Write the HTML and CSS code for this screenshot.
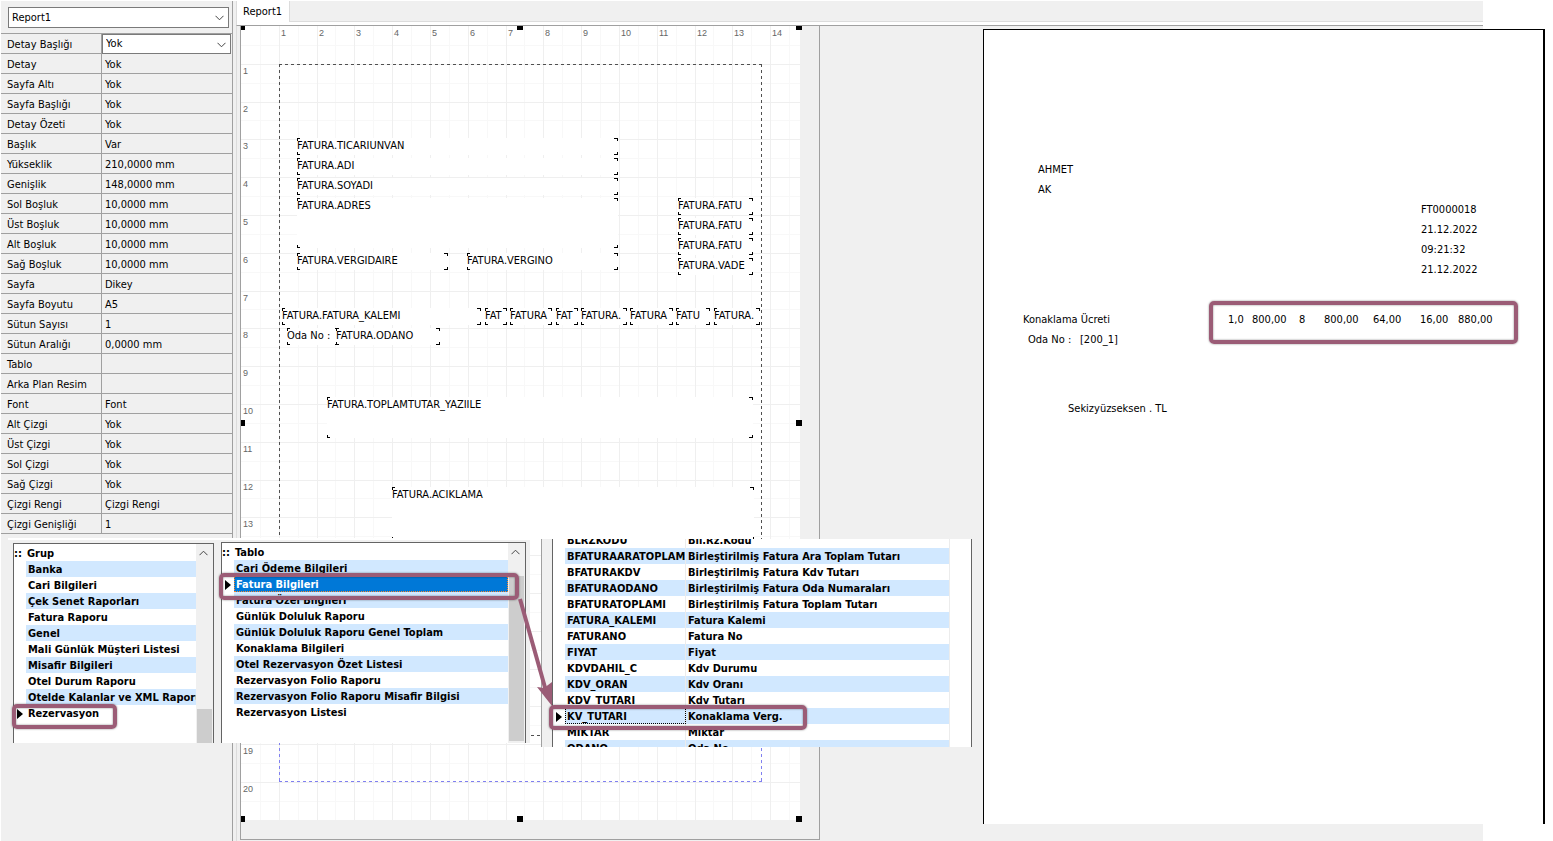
FILE: index.html
```html
<!DOCTYPE html>
<html lang="tr">
<head>
  <meta charset="UTF-8">
  <title>Report1</title>
  <link rel="stylesheet" href="styles.css">
</head>
<body>
  <div class="app">
    <!-- Properties -->
    <aside class="sidebar">
      <div class="report-picker">
        <div class="combo">
          <select aria-label="Rapor"><option>Report1</option></select>
          <svg class="chevron" viewBox="0 0 9 6"><path d="M.5 .8l4 4 4-4"/></svg>
        </div>
      </div>
      <table class="props">
        <tr><th><label for="detayBasligi">Detay Başlığı</label></th><td class="editing">
          <div class="combo">
            <select id="detayBasligi"><option>Yok</option><option>Var</option></select>
            <svg class="chevron" viewBox="0 0 9 6"><path d="M.5 .8l4 4 4-4"/></svg>
          </div>
        </td></tr>
        <tr><th>Detay</th><td>Yok</td></tr>
        <tr><th>Sayfa Altı</th><td>Yok</td></tr>
        <tr><th>Sayfa Başlığı</th><td>Yok</td></tr>
        <tr><th>Detay Özeti</th><td>Yok</td></tr>
        <tr><th>Başlık</th><td>Var</td></tr>
        <tr><th>Yükseklik</th><td>210,0000 mm</td></tr>
        <tr><th>Genişlik</th><td>148,0000 mm</td></tr>
        <tr><th>Sol Boşluk</th><td>10,0000 mm</td></tr>
        <tr><th>Üst Boşluk</th><td>10,0000 mm</td></tr>
        <tr><th>Alt Boşluk</th><td>10,0000 mm</td></tr>
        <tr><th>Sağ Boşluk</th><td>10,0000 mm</td></tr>
        <tr><th>Sayfa</th><td>Dikey</td></tr>
        <tr><th>Sayfa Boyutu</th><td>A5</td></tr>
        <tr><th>Sütun Sayısı</th><td>1</td></tr>
        <tr><th>Sütun Aralığı</th><td>0,0000 mm</td></tr>
        <tr><th>Tablo</th><td></td></tr>
        <tr><th>Arka Plan Resim</th><td></td></tr>
        <tr><th>Font</th><td>Font</td></tr>
        <tr><th>Alt Çizgi</th><td>Yok</td></tr>
        <tr><th>Üst Çizgi</th><td>Yok</td></tr>
        <tr><th>Sol Çizgi</th><td>Yok</td></tr>
        <tr><th>Sağ Çizgi</th><td>Yok</td></tr>
        <tr><th>Çizgi Rengi</th><td>Çizgi Rengi</td></tr>
        <tr><th>Çizgi Genişliği</th><td>1</td></tr>
      </table>
    </aside>

    <!-- Report designer and print preview -->
    <main class="main">
      <nav class="tabs"><button class="tab">Report1</button></nav>
      <div class="work">
        <section class="designer">
          <div class="canvas" id="canvas">
            <svg class="grid" id="grid" width="559" height="794"></svg>
          </div>
        </section>
        <section class="preview" id="preview">
          <div class="mark mark-totals"></div>
        </section>
      </div>
    </main>

    <!-- Grup / Tablo -->
    <div class="picker">
      <div class="list list-group">
        <div class="list-body">
          <div class="list-head"><span class="dots">::</span>Grup</div>
          <table class="rows">
            <tr><td></td><td>Banka</td></tr>
            <tr><td></td><td>Cari Bilgileri</td></tr>
            <tr><td></td><td>Çek Senet Raporları</td></tr>
            <tr><td></td><td>Fatura Raporu</td></tr>
            <tr><td></td><td>Genel</td></tr>
            <tr><td></td><td>Mali Günlük Müşteri Listesi</td></tr>
            <tr><td></td><td>Misafir Bilgileri</td></tr>
            <tr><td></td><td>Otel Durum Raporu</td></tr>
            <tr><td></td><td>Otelde Kalanlar ve XML Raporu</td></tr>
            <tr><td><i class="pointer"></i></td><td>Rezervasyon</td></tr>
          </table>
        </div>
        <div class="scroll">
          <svg class="up" viewBox="0 0 9 6"><path d="M.5 5.2l4-4 4 4"/></svg>
          <div class="thumb thumb-group"></div>
        </div>
      </div>
      <div class="list list-table">
        <div class="list-body">
          <div class="list-head"><span class="dots">::</span>Tablo</div>
          <table class="rows">
            <tr><td></td><td>Cari Ödeme Bilgileri</td></tr>
            <tr class="selected"><td><i class="pointer"></i></td><td>Fatura Bilgileri</td></tr>
            <tr><td></td><td>Fatura Özel Bilgileri</td></tr>
            <tr><td></td><td>Günlük Doluluk Raporu</td></tr>
            <tr><td></td><td>Günlük Doluluk Raporu Genel Toplam</td></tr>
            <tr><td></td><td>Konaklama Bilgileri</td></tr>
            <tr><td></td><td>Otel Rezervasyon Özet Listesi</td></tr>
            <tr><td></td><td>Rezervasyon Folio Raporu</td></tr>
            <tr><td></td><td>Rezervasyon Folio Raporu Misafir Bilgisi</td></tr>
            <tr><td></td><td>Rezervasyon Listesi</td></tr>
          </table>
        </div>
        <div class="scroll">
          <svg class="up" viewBox="0 0 9 6"><path d="M.5 5.2l4-4 4 4"/></svg>
          <div class="thumb thumb-table"></div>
        </div>
      </div>
    </div>

    <!-- Alanlar -->
    <div class="fields">
      <div class="fields-body">
        <table class="rows rows-fields">
          <tr><td></td><td>BLRZKODU</td><td>Bil.Rz.Kodu</td></tr>
          <tr><td></td><td>BFATURAARATOPLAMI</td><td>Birleştirilmiş Fatura Ara Toplam Tutarı</td></tr>
          <tr><td></td><td>BFATURAKDV</td><td>Birleştirilmiş Fatura Kdv Tutarı</td></tr>
          <tr><td></td><td>BFATURAODANO</td><td>Birleştirilmiş Fatura Oda Numaraları</td></tr>
          <tr><td></td><td>BFATURATOPLAMI</td><td>Birleştirilmiş Fatura Toplam Tutarı</td></tr>
          <tr><td></td><td>FATURA_KALEMI</td><td>Fatura Kalemi</td></tr>
          <tr><td></td><td>FATURANO</td><td>Fatura No</td></tr>
          <tr><td></td><td>FIYAT</td><td>Fiyat</td></tr>
          <tr><td></td><td>KDVDAHIL_C</td><td>Kdv Durumu</td></tr>
          <tr><td></td><td>KDV_ORAN</td><td>Kdv Oranı</td></tr>
          <tr><td></td><td>KDV_TUTARI</td><td>Kdv Tutarı</td></tr>
          <tr class="current"><td><i class="pointer"></i></td><td>KV_TUTARI</td><td>Konaklama Verg.</td></tr>
          <tr><td></td><td>MIKTAR</td><td>Miktar</td></tr>
          <tr><td></td><td>ODANO</td><td>Oda No</td></tr>
        </table>
      </div>
    </div>

    <div class="mark mark-group"></div>
    <div class="mark mark-table"></div>
    <div class="mark mark-field"></div>
    <svg class="arrow" viewBox="0 0 40 112">
      <path class="shaft" d="M4 2L30 94"/>
      <path class="head" d="M21 90l7 1 8-6 0 24z"/>
    </svg>
  </div>

  <script>
    // Cetvel ve ızgara: 1 cm = 96 / 2.54 px
    const CM = 96 / 2.54;
    const W = 559, H = 794;
    const canvas = document.getElementById("canvas");
    const preview = document.getElementById("preview");

    function line(x1, y1, x2, y2, cls) {
      return `<line x1="${x1}" y1="${y1}" x2="${x2}" y2="${y2}" class="${cls}"/>`;
    }

    let svg = "";
    ["minor", "major"].forEach((cls, major) => {
      for (let i = 1; i < 43; i++) {
        if ((i % 2 === 0) !== Boolean(major)) continue;
        const p = Math.round(i * CM / 2) + 0.5;
        if (p < W) svg += line(p, 0, p, H, cls);
        if (p < H) svg += line(0, p, W, p, cls);
      }
    });
    // Kenar boşlukları
    svg += line(38, 38.5, 521, 38.5, "edge");
    svg += line(38.5, 38, 38.5, 710, "edge");
    svg += line(520.5, 38, 520.5, 710, "edge");
    svg += line(38, 709.5, 521, 709.5, "edge");
    svg += line(38.5, 710, 38.5, 756, "edge edge-foot");
    svg += line(520.5, 710, 520.5, 756, "edge edge-foot");
    svg += line(38, 755.5, 521, 755.5, "edge edge-foot");
    // Cetvel sayıları
    for (let i = 1; i <= 20; i++) {
      const p = Math.round(i * CM);
      if (i <= 14) svg += `<text x="${p + 2}" y="10">${i}</text>`;
      svg += `<text x="2" y="${p + 10}">${i}</text>`;
    }
    document.getElementById("grid").innerHTML = svg;

    // [metin, sol, üst, genişlik, yükseklik]
    const fields = [
      ["FATURA.TICARIUNVAN", 56, 112, 321, 17],
      ["FATURA.ADI", 56, 132, 321, 17],
      ["FATURA.SOYADI", 56, 152, 321, 17],
      ["FATURA.ADRES", 56, 172, 321, 50],
      ["FATURA.VERGIDAIRE", 56, 227, 151, 17],
      ["FATURA.VERGINO", 226, 227, 151, 17],
      ["FATURA.FATU", 437, 172, 75, 17],
      ["FATURA.FATU", 437, 192, 75, 17],
      ["FATURA.FATU", 437, 212, 75, 17],
      ["FATURA.VADE", 437, 232, 75, 17],
      ["FATURA.FATURA_KALEMI", 41, 282, 199, 17],
      ["FAT", 244, 282, 22, 17],
      ["FATURA", 269, 282, 42, 17],
      ["FAT", 315, 282, 22, 17],
      ["FATURA.", 340, 282, 46, 17],
      ["FATURA", 389, 282, 43, 17],
      ["FATU", 435, 282, 34, 17],
      ["FATURA.", 473, 282, 46, 17],
      ["Oda No :", 46, 302, 52, 17],
      ["FATURA.ODANO", 95, 302, 104, 17],
      ["FATURA.TOPLAMTUTAR_YAZIILE", 86, 371, 426, 41],
      ["FATURA.ACIKLAMA", 151, 461, 362, 53]
    ];
    fields.forEach(([text, x, y, w, h]) => {
      const el = document.createElement("div");
      el.className = "field";
      el.textContent = text;
      el.style.cssText = `left:${x}px;top:${y}px;width:${w}px;height:${h}px`;
      canvas.appendChild(el);
    });

    // Seçim tutamaçları
    [[-2, -2], [276, -2], [555, -2], [-2, 394], [555, 394], [-2, 790], [276, 790], [555, 790]].forEach(([x, y]) => {
      const el = document.createElement("i");
      el.className = "handle";
      el.style.cssText = `left:${x}px;top:${y}px`;
      canvas.appendChild(el);
    });

    // Önizleme: [metin, sol, üst]
    const printed = [
      ["AHMET", 54, 132],
      ["AK", 54, 152],
      ["FT0000018", 437, 172],
      ["21.12.2022", 437, 192],
      ["09:21:32", 437, 212],
      ["21.12.2022", 437, 232],
      ["Konaklama Ücreti", 39, 282],
      ["1,0", 244, 282],
      ["800,00", 268, 282],
      ["8", 315, 282],
      ["800,00", 340, 282],
      ["64,00", 389, 282],
      ["16,00", 436, 282],
      ["880,00", 474, 282],
      ["Oda No :", 44, 302],
      ["[200_1]", 96, 302],
      ["Sekizyüzseksen . TL", 84, 371]
    ];
    printed.forEach(([text, x, y]) => {
      const el = document.createElement("span");
      el.className = "printed";
      el.textContent = text;
      el.style.cssText = `left:${x}px;top:${y}px`;
      preview.appendChild(el);
    });
  </script>
</body>
</html>
```
FILE: styles.css
```css
* {
  box-sizing: border-box;
}

body {
  margin: 0;
  background: #fff;
  color: #000;
  font: 11px/16px Tahoma, "DejaVu Sans Condensed", "Noto Sans", sans-serif;
  overflow: hidden;
}

.app {
  position: relative;
  display: flex;
  height: 100vh;
  padding: 1px 70px 0 1px;
  background: #f0f0f0 content-box;
}

/* Properties */
.sidebar {
  width: 232px;
  flex: none;
  border-right: 1px solid #a0a0a0;
}

.report-picker {
  height: 33px;
  padding: 6px 3px 6px 7px;
  border-bottom: 1px solid #a0a0a0;
}

.combo {
  position: relative;
  height: 21px;
  border: 1px solid #7a7a7a;
  background: #fff;
}

.combo select {
  display: block;
  width: 100%;
  height: 100%;
  padding: 0 3px;
  border: 0;
  appearance: none;
  background: transparent;
  color: #000;
  font: inherit;
}

.chevron {
  position: absolute;
  right: 4px;
  top: 7px;
  width: 9px;
  height: 6px;
  pointer-events: none;
}

.chevron path,
.up path {
  fill: none;
  stroke: #444;
}

.props {
  width: 100%;
  border-collapse: separate;
  border-spacing: 0;
  table-layout: fixed;
}

.props th,
.props td {
  height: 20px;
  padding: 2px 0 0 3px;
  border-bottom: 1px solid #a0a0a0;
  font-weight: normal;
  text-align: left;
  white-space: nowrap;
}

.props th {
  width: 101px;
  padding-left: 6px;
  border-right: 1px solid #a0a0a0;
}

.props .editing {
  padding: 0 1px 0 0;
  border-bottom: 0;
}

.editing .combo {
  height: 20px;
}

/* Designer */
.main {
  flex: 1;
  display: flex;
  flex-direction: column;
  min-width: 0;
  padding-left: 3px;
}

.tabs {
  display: flex;
  height: 24px;
  flex: none;
  border-left: 1px solid #dcdcdc;
  background: linear-gradient(#dcdcdc, #dcdcdc) 0 20px / 100% 1px no-repeat,
    linear-gradient(#fff, #fff) 0 21px / 100% 3px no-repeat;
}

.tab {
  height: 21px;
  padding: 0 7px 0 6px;
  border: 0;
  border-right: 1px solid #dcdcdc;
  background: #fff;
  color: #000;
  font: inherit;
}

.work {
  flex: 1;
  display: flex;
  align-items: flex-start;
  border-left: 1px solid #dcdcdc;
  border-top: 1px solid #a0a0a0;
  padding-left: 3px;
}

.designer {
  flex: none;
  width: 580px;
  height: calc(100vh - 27px);
  border: 1px solid #a0a0a0;
  border-top: 0;
  overflow: hidden;
}

.canvas {
  position: relative;
  width: 559px;
  height: 794px;
  background: #fff;
}

.grid {
  display: block;
  shape-rendering: crispEdges;
}

.grid text {
  fill: #666;
  font: 9px "Liberation Sans", sans-serif;
}

.minor {
  stroke: #f8f8f8;
}

.major {
  stroke: #efefef;
}

.edge {
  stroke: #505050;
  stroke-dasharray: 3 3;
}

.edge-foot {
  stroke: #8080f0;
}

/* Data field with four corner brackets */
.field {
  position: absolute;
  overflow: hidden;
  white-space: nowrap;
  --k: linear-gradient(#000, #000);
  background:
    var(--k) 0 0 / 3px 1px, var(--k) 0 0 / 1px 3px,
    var(--k) 100% 0 / 4px 1px, var(--k) 100% 0 / 1px 3px,
    var(--k) 0 100% / 3px 1px, var(--k) 0 100% / 1px 3px,
    var(--k) 100% 100% / 4px 1px, var(--k) 100% 100% / 1px 3px;
  background-repeat: no-repeat;
  background-color: #fff;
}

.handle {
  position: absolute;
  width: 6px;
  height: 6px;
  background: #000;
}

/* Print preview */
.preview {
  position: relative;
  flex: 1;
  height: calc(100vh - 46px);
  margin: 3px -62px 0 163px;
  border: 1px solid #000;
  border-right-width: 2px;
  border-bottom: 0;
  background: #fff;
}

.printed {
  position: absolute;
  white-space: nowrap;
}

/* Group and table lists */
.picker {
  position: absolute;
  left: 8px;
  top: 538px;
  display: flex;
  align-items: flex-end;
  gap: 7px;
  width: 522px;
  height: 205px;
  padding-left: 5px;
  border-top: 2px solid #fff;
  background: #f0f0f0;
  font-weight: bold;
}

.list {
  display: flex;
  border: 1px solid #646464;
  border-bottom: 0;
  background: #fff;
}

.list-group {
  width: 201px;
  height: 200px;
}

.list-table {
  width: 305px;
  height: 201px;
}

.list-body {
  flex: 1;
  min-width: 0;
  overflow: hidden;
}

.list-head {
  height: 17px;
  line-height: 20px;
}

.dots {
  display: inline-block;
  width: 13px;
}

.rows {
  width: 100%;
  border-collapse: separate;
  border-spacing: 0;
  table-layout: fixed;
}

.rows td {
  height: 16px;
  padding: 2px 0 0 2px;
  overflow: hidden;
  line-height: 14px;
  white-space: nowrap;
}

.rows td:first-child {
  width: 12px;
  padding: 1px 0 0;
}

.rows tr:nth-child(odd) td + td {
  background: #d1e8ff;
}

.rows .selected td + td {
  outline: 1px dotted #ff8728;
  outline-offset: -1px;
  background: #0078d7;
  color: #fff;
}

.pointer {
  display: block;
  width: 0;
  margin-left: 3px;
  border-left: 6px solid #000;
  border-top: 5px solid transparent;
  border-bottom: 5px solid transparent;
}

.scroll {
  display: flex;
  flex-direction: column;
  width: 17px;
  background: #f0f0f0;
}

.up {
  width: 9px;
  height: 6px;
  margin: 6px 3px;
}

.thumb {
  width: 15px;
  margin-top: auto;
  margin-left: 1px;
  background: #cdcdcd;
}

.thumb-group {
  height: 34px;
}

.thumb-table {
  height: 165px;
  margin-bottom: 2px;
}

/* Field list */
.fields {
  position: absolute;
  left: 541px;
  top: 539px;
  width: 431px;
  height: 208px;
  padding-left: 10px;
  border-left: 1px solid #a0a0a0;
  background: #f0f0f0;
  font-weight: bold;
}

.fields-body {
  height: 100%;
  padding-right: 21px;
  overflow: hidden;
  border: solid #646464;
  border-width: 0 1px;
  background: #fff;
}

.rows-fields {
  margin-top: -7px;
}

.rows-fields td + td {
  border-right: 1px solid #ececec;
}

.rows-fields td:nth-child(2) {
  width: 121px;
}

.rows-fields tr:nth-child(odd) td + td {
  background: #fff;
}

.rows-fields tr:nth-child(even) td + td {
  background: #d1e8ff;
}

.current td:nth-child(2) {
  outline: 1px dotted #000;
  outline-offset: -1px;
}

/* Highlight frames */
.mark {
  position: absolute;
  border: 4px solid #9b5c76;
  border-radius: 5px;
  box-shadow: 0 0 2px rgba(0, 0, 0, .5), inset 0 0 2px rgba(0, 0, 0, .5);
}

.mark-group {
  left: 12px;
  top: 704px;
  width: 105px;
  height: 25px;
}

.mark-table {
  left: 219px;
  top: 573px;
  width: 300px;
  height: 27px;
}

.mark-field {
  left: 549px;
  top: 705px;
  width: 258px;
  height: 25px;
}

.mark-totals {
  left: 225px;
  top: 271px;
  width: 309px;
  height: 43px;
}

.arrow {
  position: absolute;
  left: 516px;
  top: 597px;
  width: 40px;
  height: 112px;
}

.shaft {
  fill: none;
  stroke: #9b5c76;
  stroke-width: 4;
}

.head {
  fill: #9b5c76;
}
```
